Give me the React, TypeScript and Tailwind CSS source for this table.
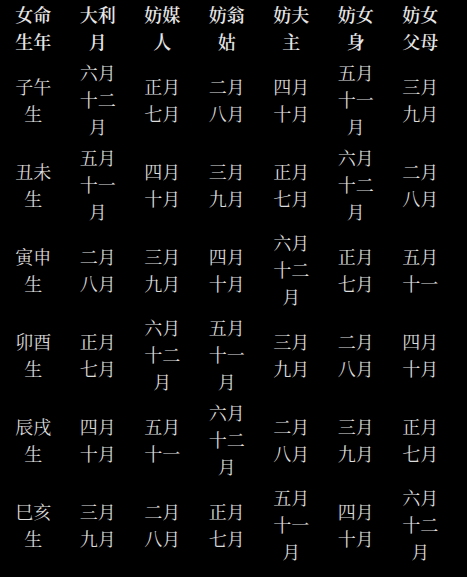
const header = ["女命生年", "大利月", "妨媒人", "妨翁姑", "妨夫主", "妨女身", "妨女父母"];

const rows = [
  ["子午生", "六月十二月", "正月七月", "二月八月", "四月十月", "五月十一月", "三月九月"],
  ["丑未生", "五月十一月", "四月十月", "三月九月", "正月七月", "六月十二月", "二月八月"],
  ["寅申生", "二月八月", "三月九月", "四月十月", "六月十二月", "正月七月", "五月十一"],
  ["卯酉生", "正月七月", "六月十二月", "五月十一月", "三月九月", "二月八月", "四月十月"],
  ["辰戌生", "四月十月", "五月十一", "六月十二月", "二月八月", "三月九月", "正月七月"],
  ["巳亥生", "三月九月", "二月八月", "正月七月", "五月十一月", "四月十月", "六月十二月"],
];

// two characters per line, like the narrow table cells
function lines(text: string) {
  const out: string[] = [];
  for (let i = 0; i < text.length; i += 2) out.push(text.slice(i, i + 2));
  return out;
}

function Cell({ text, bold }: { text: string; bold?: boolean }) {
  return (
    <div className={`flex flex-col items-center justify-center py-px ${bold ? "font-semibold text-[#e6e6e6]" : "text-[#dcdcdc]"}`}>
      {lines(text).map((l, i) => (
        <span key={i} className="block leading-[27px]">
          {l}
        </span>
      ))}
    </div>
  );
}

export default function App() {
  return (
    <div
      className="w-[467px] h-[577px] bg-black overflow-hidden pl-[2px] text-[18px]"
      style={{ fontFamily: '"Noto Serif CJK SC", "Noto Sans CJK SC", serif' }}
    >
      <div className="grid grid-cols-[repeat(7,62.5px)] gap-[2px]">
        {header.map((h) => (
          <Cell key={h} text={h} bold />
        ))}
        {rows.map((r) =>
          r.map((c, i) => <Cell key={r[0] + i} text={c} />)
        )}
      </div>
    </div>
  );
}
